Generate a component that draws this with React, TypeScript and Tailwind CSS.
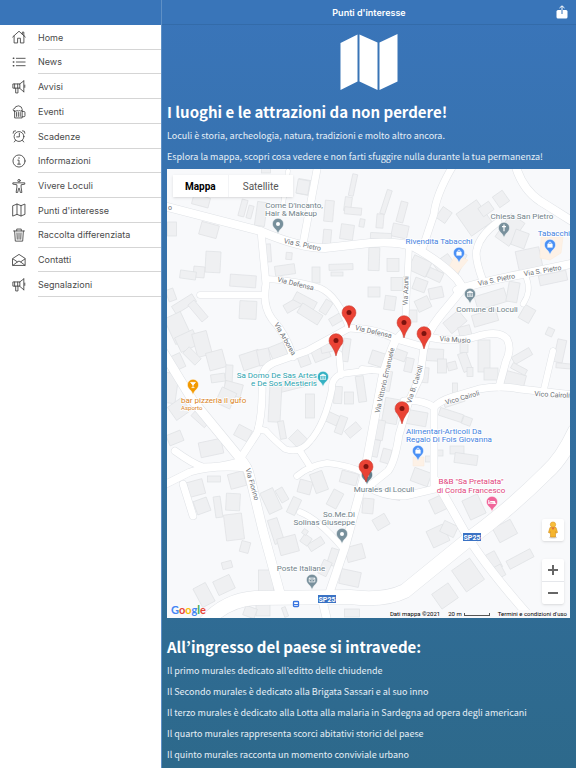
import type { ReactNode } from "react";

const line = {
  fill: "none",
  stroke: "currentColor",
  strokeWidth: 1,
  strokeLinejoin: "round" as const,
  strokeLinecap: "round" as const,
};

const megaphone = (
  <>
    <path d="M13.500 1v12.500M8.500 4.800L13.500 1M8.500 9.200l5 4.300M14.600 5.800v2.600" />
    <path d="M8.500 4.500H1v4.800h7.500zM3 4.600v4.600M6.500 4.600v4.600M4.200 9.400v5.400h2.600V9.400" />
  </>
);

const icons: Record<string, ReactNode> = {
  home: <path d="M.8 8L8 1.400 15.200 8M11.800 4.800V2.400h1.700v4M2.400 6.800v8h4V9.400h3.200v5.400h4v-8" />,
  list: (
    <>
      <path d="M5 3.800h10M5 8h10M5 12.200h10" />
      <path d="M1.600 3.800h.4M1.600 8h.4M1.600 12.200h.4" strokeWidth={1.800} />
    </>
  ),
  megaphone,
  beer: (
    <>
      <path d="M3 6.600v8.200h8.600V6.200M11.600 7.400h2q1.200 0 1.200 1.200v3.600q0 1.200-1.200 1.200h-2" />
      <path d="M3 7.400Q1 7 1.400 5.200 1.800 3.800 3.200 3.800 3.800 1.200 6 1.400 7.600.4 9 1.600q2.200.4 2.200 2.400 1 1.400 0 2.400-1.400 1-2.800 0-1 1-2.600 0-1 1.200-2.800.6z" />
      <path d="M5.200 8.600v4.400M7.300 8.600v4.400M9.400 8.600v4.400" />
    </>
  ),
  alarm: (
    <>
      <circle cx="8" cy="8.600" r="5.600" />
      <path d="M8.400 5v4H5.400M1.200 4.800Q.8 1.600 4 2M14.800 4.800Q15.200 1.600 12 2M4 13l-1.400 1.800M12 13l1.400 1.800" />
    </>
  ),
  info: (
    <>
      <circle cx="8" cy="8" r="6.900" />
      <path d="M6.600 7H8v4.400M6.400 11.600h3.200" />
      <path d="M8 4.500v.2" strokeWidth={1.500} />
    </>
  ),
  body: (
    <>
      <circle cx="8" cy="1.900" r="1.400" />
      <path d="M1.400 4.400h13.200v1.500l-4.200.7v2.600l.9 6.200H9.500L8.400 10.600h-.8L6.500 15.400H4.700l.9-6.200V6.600L1.400 5.900z" />
    </>
  ),
  map: <path d="M1.200 3L5.700 1.200l4.600 1.800 4.500-1.800v11.800l-4.500 1.800-4.600-1.800-4.500 1.800zM5.700 1.200v11.800M10.300 3v11.800" />,
  trash: (
    <path d="M1.800 3.400h12.400M5.400 3.200V1.200h5.200v2M3 3.600l.8 11.400h8.400L13 3.600M5.700 5.600l.3 7.200M8 5.600v7.200M10.300 5.600l-.3 7.200" />
  ),
  mail: (
    <path d="M1 6.200L8 1.600l7 4.600v8H1zM1.200 6.800L6.200 10.200 8 9.200l1.800 1 5-3.400M1.200 14L6.200 10.200M14.800 14L9.800 10.200" />
  ),
};

const menu: [string, string][] = [
  ["home", "Home"],
  ["list", "News"],
  ["megaphone", "Avvisi"],
  ["beer", "Eventi"],
  ["alarm", "Scadenze"],
  ["info", "Informazioni"],
  ["body", "Vivere Loculi"],
  ["map", "Punti d'interesse"],
  ["trash", "Raccolta differenziata"],
  ["mail", "Contatti"],
  ["megaphone", "Segnalazioni"],
];

const roads: [string, number][] = [
  ["M160 206L260 232Q300 249 325 249L370 244Q395 242 412 247Q440 262 457 280L463 289L440 317Q426 335 424 348", 8],
  ["M457 291Q480 283 523 275L575 264", 8],
  ["M409 247L405 330L396 340", 6],
  ["M454 165Q436 195 434 215L423 248", 7],
  ["M515 165Q522 190 540 202L575 224", 8],
  ["M483 282Q474 258 477 250Q480 236 498 223", 7],
  ["M526 278Q532 292 523 305", 5],
  ["M318 165L303 245", 7],
  ["M288 172L283 205", 4],
  ["M261 232L266 285Q262 306 272 320Q286 335 293 358", 7],
  ["M200 296H264", 6],
  ["M266 280Q300 282 320 289Q338 297 349 329", 6],
  ["M349 329L307 352L273 364Q262 369 262 382Q263 415 257 434L238 463Q220 468 203 468Q193 465 175 452", 7],
  ["M349 329Q378 330 396 340L424 348", 7],
  ["M339 355L341 376M372 371L341 375Q331 380 332 390Q325 425 310 442Q300 455 285 450Q273 440 266 432L258 430M300 452L311 469", 6],
  ["M297 477Q310 466 327 464Q347 466 365 474", 6],
  ["M160 348L193 402L239 458Q248 467 250 478L263 532L280 594", 9],
  ["M160 488L190 473Q212 466 248 469M183 485L193 517", 7],
  ["M396 340Q387 360 382 380L363 482L345 548L328 598L322 600L328 625", 8],
  ["M424 348L420 378L409 402L399 436Q395 463 388 472L368 488Q385 498 405 497L443 488", 7],
  ["M404 402Q420 400 434 408V488", 7],
  ["M434 408Q440 402 452 398L479 390Q500 386 520 390L575 396", 7],
  ["M428 338Q455 344 475 338Q499 330 507 340Q512 350 506 362L499 388", 7],
  ["M553 352L544 390M362 370L381 372", 6],
  ["M300 513Q318 520 342 548", 6],
  ["M204 625Q225 601 255 599L350 598Q385 602 405 592L469 540Q510 510 546 474Q562 460 575 432", 14],
  ["M436 482L466 535Q485 567 530 618", 8],
];

// centre x, centre y, width, height, rotation
const buildings: [number, number, number, number, number][] = [
  [201, 202, 17, 10, 15], [304, 188, 13, 15, 10], [266, 171, 9, 6, 0], [303, 188, 12, 14, 10],
  [243, 209, 6, 17, 15], [250, 213, 5, 13, 15], [261, 215, 10, 24, 8], [329, 212, 9, 21, 5],
  [353, 186, 5, 22, 12], [348, 205, 7, 14, 8], [353, 212, 17, 7, 5], [347, 233, 13, 15, 8],
  [362, 224, 5, 8, 10], [327, 239, 8, 17, 5], [172, 230, 9, 14, 0], [209, 231, 18, 13, 15],
  [213, 263, 15, 21, 3], [199, 273, 11, 11, 5], [188, 276, 16, 8, 8], [268, 254, 6, 18, -4],
  [289, 257, 6, 7, 5], [285, 271, 20, 10, -8], [316, 276, 8, 16, 0], [341, 268, 24, 6, -2],
  [337, 275, 12, 4, 0], [243, 282, 26, 12, 4], [248, 311, 17, 18, 3], [171, 296, 8, 12, -20],
  [184, 305, 24, 9, -32], [198, 312, 22, 8, 50], [178, 329, 18, 28, -25], [293, 306, 18, 9, -30],
  [305, 302, 23, 9, 28], [310, 315, 24, 11, 32], [326, 308, 8, 14, 32], [337, 320, 15, 8, -30],
  [187, 342, 20, 16, -25], [175, 364, 17, 15, -25], [202, 345, 15, 24, -15], [216, 361, 17, 18, -15],
  [192, 357, 17, 9, 45], [251, 361, 20, 16, -18], [278, 352, 16, 13, -22], [264, 358, 12, 16, -12],
  [229, 376, 7, 20, 3], [218, 379, 14, 8, -8], [233, 390, 18, 13, 15], [304, 361, 11, 12, -20],
  [321, 355, 17, 12, -22], [328, 347, 15, 12, -12], [346, 351, 7, 23, 8], [294, 385, 45, 10, -14],
  [275, 404, 12, 38, 3], [282, 431, 6, 18, -10], [310, 407, 9, 24, 0], [338, 396, 8, 17, 3],
  [349, 399, 9, 12, 0], [361, 390, 8, 26, -8], [331, 419, 16, 10, 25], [341, 426, 8, 18, 20],
  [353, 431, 15, 9, -40], [298, 440, 13, 14, -45], [243, 434, 15, 12, 28], [226, 399, 16, 17, 25],
  [211, 449, 23, 15, -12], [201, 419, 10, 18, -48], [170, 389, 14, 30, 8], [179, 410, 17, 16, -35],
  [175, 439, 15, 11, -22], [196, 489, 16, 15, -15], [214, 480, 13, 6, 0], [202, 507, 14, 14, -20],
  [233, 503, 14, 17, 3], [218, 508, 7, 21, -8], [237, 481, 16, 15, -15], [234, 528, 18, 26, -7],
  [245, 548, 9, 11, 15], [227, 566, 10, 7, -15], [224, 586, 18, 15, -25], [204, 596, 14, 21, -28],
  [266, 582, 15, 22, 0], [263, 611, 14, 12, 0], [276, 532, 10, 25, -18], [288, 546, 19, 17, -15],
  [271, 502, 14, 23, -25], [282, 496, 8, 14, -30], [294, 507, 9, 17, 25], [305, 488, 13, 13, 15],
  [319, 483, 13, 20, -20], [335, 500, 11, 17, 28], [316, 545, 16, 8, -32], [306, 541, 9, 9, 35],
  [333, 558, 8, 17, 18], [325, 569, 9, 15, 25], [355, 554, 18, 15, -15], [350, 579, 20, 15, 12],
  [349, 479, 17, 12, 15], [393, 497, 15, 6, 12], [381, 523, 14, 12, -30], [368, 507, 11, 15, 5],
  [386, 203, 5, 25, 18], [380, 222, 7, 14, 5], [402, 213, 7, 21, 15], [400, 232, 16, 13, 12],
  [474, 219, 25, 27, -35], [486, 210, 13, 10, -35], [501, 200, 12, 13, -35], [444, 216, 11, 13, 35],
  [510, 231, 17, 28, 35], [529, 260, 24, 20, -12], [520, 240, 14, 16, 20], [444, 265, 18, 13, -35],
  [458, 265, 9, 24, 25], [381, 237, 21, 6, 3], [374, 260, 11, 23, 2], [393, 266, 12, 13, 0],
  [397, 285, 12, 13, 0], [374, 293, 12, 10, 0], [390, 304, 11, 14, 8], [420, 267, 19, 16, 25],
  [435, 276, 15, 10, 25], [420, 286, 13, 12, 20], [436, 294, 14, 11, -12], [423, 305, 14, 12, -25],
  [413, 317, 8, 12, 0], [455, 323, 20, 14, -40], [491, 300, 31, 14, -17], [513, 293, 11, 20, 10],
  [553, 279, 28, 10, -12], [527, 315, 12, 15, 30], [485, 319, 25, 12, -16], [465, 333, 12, 12, -15],
  [378, 360, 16, 14, 18], [397, 355, 19, 10, 20], [409, 366, 8, 14, 12], [387, 382, 8, 20, 10],
  [391, 412, 15, 25, 10], [379, 431, 10, 20, 10], [374, 449, 10, 17, 12], [386, 457, 9, 14, 15],
  [435, 356, 17, 12, 3], [442, 367, 9, 14, 0], [452, 367, 9, 8, -15], [465, 363, 9, 19, -20],
  [464, 348, 8, 11, 0], [484, 357, 12, 32, 0], [470, 373, 6, 9, 0], [491, 375, 14, 12, 0],
  [515, 381, 20, 14, 15], [522, 357, 20, 8, -30], [519, 370, 16, 6, 28], [550, 333, 7, 8, 25],
  [560, 352, 9, 23, 12], [565, 367, 18, 5, 5], [454, 402, 21, 7, -18], [455, 390, 5, 12, 0],
  [416, 419, 22, 14, 10], [424, 376, 9, 15, 5], [451, 416, 24, 8, 18], [467, 422, 9, 8, 20],
  [457, 451, 14, 8, 0], [466, 460, 23, 10, 8], [439, 454, 8, 6, 0], [428, 460, 5, 6, 0],
  [421, 478, 18, 14, 20], [439, 505, 16, 15, -25], [474, 508, 17, 21, -25], [438, 537, 18, 18, -25],
  [449, 530, 15, 12, 25], [505, 532, 20, 16, -28], [520, 560, 27, 9, -28], [494, 562, 10, 18, -28],
  [500, 572, 7, 12, -28], [468, 576, 22, 26, -35], [445, 597, 20, 18, -35], [495, 388, 5, 6, 0],
  [305, 533, 5, 5, 35], [250, 613, 12, 10, 20], [352, 614, 15, 8, 0], [285, 613, 4, 10, -20],
];

const GREY = "#6f8189";
const BLUE = "#3f7fe0";
const TEAL = "#2ba3af";
const ORANGE = "#d98324";
const PINK = "#e0447c";
const ROAD = "#6c7075";

const labels: [string, number, number, string, string, number][] = [
  ["Come D'incanto,", 294, 209, GREY, "middle", 8],
  ["Hair & Makeup", 291, 217, GREY, "middle", 8],
  ["Chiesa San Pietro", 522, 220, GREY, "middle", 8],
  ["Rivendita Tabacchi", 439, 245, BLUE, "middle", 8],
  ["Tabacchi", 570, 237, BLUE, "end", 8],
  ["Comune di Loculi", 487, 313, GREY, "middle", 8],
  ["Sa Domo De Sas Artes", 317, 379, TEAL, "end", 8],
  ["e De Sos Mestieris", 317, 387, TEAL, "end", 8],
  ["bar pizzeria il gufo", 181, 404, ORANGE, "start", 8],
  ["Asporto", 181, 411, ORANGE, "start", 6],
  ["Alimentari-Articoli Da", 406, 435, BLUE, "start", 8],
  ["Regalo Di Fois Giovanna", 406, 443, BLUE, "start", 8],
  ["B&B \"Sa Pretalata\"", 471, 485, PINK, "middle", 8],
  ["di Corda Francesco", 471, 494, PINK, "middle", 8],
  ["Murales di Loculi", 384, 493, GREY, "middle", 8],
  ["So.Me.Di", 355, 518, GREY, "end", 8],
  ["Solinas Giuseppe", 355, 526, GREY, "end", 8],
  ["Poste Italiane", 301, 572, GREY, "middle", 8],
];

// text, centre x, centre y, rotation
const streets: [string, number, number, number][] = [
  ["Via S. Pietro", 302, 248, 12],
  ["Via Defensa", 295, 287, 14],
  ["Via Arborea", 283, 341, 60],
  ["Via Azuni", 408, 292, -88],
  ["Via S. Pietro", 497, 283, -12],
  ["Via S. Pietro", 543, 274, -10],
  ["Via Defensa", 373, 335, 13],
  ["Via Musio", 455, 343, 4],
  ["Via Vittorio Emanuele", 387, 382, -77],
  ["Via B. Cairoli", 417, 386, -72],
  ["Vico Cairoli", 463, 401, -16],
  ["Vico Cairoli", 552, 398, 3],
  ["Via Fiorino", 250, 486, 74],
];

const places: [number, number, string, string][] = [
  [278, 225, "#78909c", "dot"],
  [504, 229, "#78909c", "cross"],
  [459, 254, "#4a90f5", "bag"],
  [550, 246, "#4a90f5", "bag"],
  [470, 295, "#78909c", "hall"],
  [323, 378, "#35b1c3", "hall"],
  [193, 386, "#f29900", "cup"],
  [418, 452, "#4a90f5", "bag"],
  [492, 503, "#f0659a", "bed"],
  [367, 476, "#607d8b", "dot"],
  [342, 535, "#78909c", "dot"],
  [312, 581, "#78909c", "mail"],
];

const glyphs: Record<string, ReactNode> = {
  dot: <circle r="2" fill="#fff" />,
  cross: <path d="M0-3.500V3.200M-2-1.300H2" stroke="#fff" strokeWidth="1.200" />,
  bag: (
    <>
      <rect x="-2.600" y="-1.200" width="5.200" height="3.800" fill="#fff" />
      <path d="M-1.300-1Q-1.300-3 0-3T1.300-1" fill="none" stroke="#fff" strokeWidth=".8" />
    </>
  ),
  hall: <path d="M-3-1.300L0-3 3-1.300zM-2.400-.6V2M-.8-.6V2M.8-.6V2M2.400-.6V2M-3 2.400H3" fill="#fff" stroke="#fff" strokeWidth=".7" />,
  cup: <path d="M-2.400-2.600H2.400L0 .2zM0 0V2.600M-1.500 2.600H1.500" fill="#fff" stroke="#fff" strokeWidth=".8" />,
  bed: <path d="M-3.200-2V2M-3.200 1H3.200V2M-1.800-.5H2.700V1" fill="#fff" stroke="#fff" strokeWidth="1" />,
  mail: <path d="M-2.800-1.900H2.800V1.900H-2.800zM-2.800-1.900L0 .4 2.800-1.900" fill="none" stroke="#fff" strokeWidth=".8" />,
};

const pins: [number, number][] = [
  [349, 329], [336, 357], [404, 339], [424, 350], [402, 425], [366, 483],
];

function TownMap() {
  return (
    <svg
      className="block h-full w-full font-['Roboto',sans-serif]"
      viewBox="167 170 403 449"
      preserveAspectRatio="xMidYMid slice"
      role="img"
      aria-label="Mappa di Loculi"
    >
      <rect x="-400" y="-200" width="1600" height="1200" fill="#f8f9fb" />
      <g fill="#eff0f2" stroke="#dfe1e4" strokeWidth=".7">
        {buildings.map(([x, y, w, h, r], i) => (
          <rect key={i} x={-w / 2} y={-h / 2} width={w} height={h} transform={`translate(${x} ${y}) rotate(${r})`} />
        ))}
      </g>
      <g fill="#fdf1e6" stroke="#faead9" strokeWidth=".5">
        <path d="M447 272l8-16 13 5-13 16zM541 238h22l-2 16-11 7-10-2zM413 458h11v9h-11z" />
      </g>
      <g fill="none" stroke="#dfe2e6" strokeLinecap="round" strokeLinejoin="round">
        {roads.map(([d, w]) => (
          <path key={d} d={d} strokeWidth={w + 1} />
        ))}
      </g>
      <g fill="none" stroke="#fff" strokeLinecap="round" strokeLinejoin="round">
        {roads.map(([d, w]) => (
          <path key={d} d={d} strokeWidth={w} />
        ))}
      </g>
      <g fontSize="7" fill={ROAD} stroke="#fff" strokeWidth="1.500" paintOrder="stroke" textAnchor="middle">
        {streets.map(([t, x, y, r]) => (
          <text key={t + x} transform={`translate(${x} ${y}) rotate(${r})`}>
            {t}
          </text>
        ))}
        <text x="170" y="211">o</text>
      </g>
      {places.map(([x, y, color, glyph]) => (
        <g key={`${x}-${y}`} transform={`translate(${x} ${y})`}>
          <path d="M0 9.500Q-1 6-3.800 4A5.600 5.600 0 1 1 3.800 4Q1 6 0 9.500z" fill={color} stroke="#fff" strokeWidth=".5" />
          {glyphs[glyph]}
        </g>
      ))}
      <g stroke="#fff" strokeWidth="1.500" paintOrder="stroke">
        {labels.map(([t, x, y, color, anchor, size]) => (
          <text key={t} x={x} y={y} fill={color} fontSize={size} textAnchor={anchor as "start" | "middle" | "end"}>
            {t}
          </text>
        ))}
      </g>
      {[[327, 600], [472, 538]].map(([x, y]) => (
        <g key={x}>
          <rect x={x - 9} y={y - 4} width="18" height="8" fill="#3a72c4" />
          <text x={x} y={y + 2.500} fontSize="7" fontWeight="700" fill="#fff" textAnchor="middle">
            SP25
          </text>
        </g>
      ))}
      <rect x="293.500" y="602.500" width="5" height="5" rx=".8" fill="#fff" stroke="#3874e0" strokeWidth="1.300" />
      <path d="M294 605.500h4" stroke="#3874e0" />
      {pins.map(([x, y]) => (
        <g key={`${x}-${y}`} transform={`translate(${x} ${y})`}>
          <path d="M0 0Q-1-5-4.500-10A7 7 0 1 1 4.500-10Q1-5 0 0z" fill="#ea4335" stroke="#c5372b" strokeWidth=".5" />
          <circle cy="-15.500" r="2.500" fill="#7d130e" />
        </g>
      ))}
    </svg>
  );
}

function MapPanel() {
  return (
    <section className="relative mt-0.5 h-[449px] overflow-hidden bg-[#f8f9fb]">
      <TownMap />
      <div className="absolute left-1.5 top-1.5 flex h-[22px] bg-white font-['Roboto',sans-serif] text-[10px] shadow">
        <button type="button" className="border-r border-gray-100 px-3 font-bold text-black">
          Mappa
        </button>
        <button type="button" className="px-3.5 text-[#565656]">
          Satellite
        </button>
      </div>
      <button
        type="button"
        aria-label="Street View"
        className="absolute bottom-[77px] right-1.5 flex h-[22px] w-[22px] items-center justify-center rounded-xs bg-white shadow"
      >
        <svg width="12" height="18" viewBox="0 0 12 18">
          <ellipse cx="6" cy="16.500" rx="4" ry="1" fill="#d8d8d8" />
          <path d="M3 6.500h6l1.500 5-1.300.6-.7-1.500V16h-5v-5.400l-.7 1.500-1.300-.6z" fill="#f5b52e" stroke="#d48b14" strokeWidth=".6" />
          <circle cx="6" cy="3.600" r="2.700" fill="#f8bf3a" stroke="#d48b14" strokeWidth=".5" />
          <path d="M4.400 6.600L6 9l1.600-2.400z" fill="#e56a3b" />
        </svg>
      </button>
      <div className="absolute bottom-3.5 right-1.5 flex h-[45px] w-[22px] flex-col rounded-xs bg-white shadow">
        <button type="button" aria-label="Zoom avanti" className="flex flex-1 items-center justify-center border-b border-gray-200">
          <svg width="10" height="10" viewBox="0 0 10 10">
            <path d="M0 5h10M5 0v10" stroke="#666" strokeWidth="2" />
          </svg>
        </button>
        <button type="button" aria-label="Zoom indietro" className="flex flex-1 items-center justify-center">
          <svg width="10" height="10" viewBox="0 0 10 10">
            <path d="M0 5h10" stroke="#666" strokeWidth="2" />
          </svg>
        </button>
      </div>
      <a
        href="#google"
        className="absolute bottom-px left-1 font-['Lato',sans-serif] text-[11px] font-bold leading-[14px] text-[#4285f4]"
      >
        G<span className="text-[#ea4335]">o</span>
        <span className="text-[#fbbc05]">o</span>g<span className="text-[#34a853]">l</span>
        <span className="text-[#ea4335]">e</span>
      </a>
      <div className="absolute bottom-0 right-0 flex h-2 items-center gap-2 bg-[#f8f9fb] px-[3px] font-['Roboto',sans-serif] text-[6px] leading-[8px] text-black">
        <span>Dati mappa ©2021</span>
        <span className="flex items-center gap-0.5">
          20 m
          <span className="block h-[3px] w-[26px] border border-t-0 border-[#555]" />
        </span>
        <a href="#termini">Termini e condizioni d'uso</a>
      </div>
    </section>
  );
}

const murals = [
  "Il primo murales dedicato all’editto delle chiudende",
  "Il Secondo murales è dedicato alla Brigata Sassari e al suo inno",
  "Il terzo murales è dedicato alla Lotta alla malaria in Sardegna ad opera degli americani",
  "Il quarto murales rappresenta scorci abitativi storici del paese",
  "Il quinto murales racconta un momento conviviale urbano",
];

export default function App() {
  return (
    <div className="flex min-h-screen bg-white font-['Inter',sans-serif]">
      <aside className="w-[161px] shrink-0 bg-white">
        <div className="h-[25px] bg-[#3975b9]" />
        <nav className="grid h-[272px] grid-rows-11 text-[9px] text-[#4a4a4a]">
          {menu.map(([icon, label]) => (
            <a key={label} href={`#${icon}`} className="flex items-stretch pl-3">
              <svg className="mr-3 w-3.5 shrink-0 self-center text-[#444]" height="14" viewBox="0 0 16 16" {...line}>
                {icons[icon]}
              </svg>
              <span className="flex flex-1 items-center border-b border-[#d5d5d5] pt-px">{label}</span>
            </a>
          ))}
        </nav>
      </aside>
      <div className="flex min-w-0 flex-1 flex-col border-l border-[#5f90c6] bg-linear-to-b from-[#3a75ba] to-[#2d698b]">
        <header className="grid h-[25px] grid-cols-[1fr_auto_1fr] items-center border-b border-[#336ba9] bg-[#3975b9] px-2 text-white">
          <h1 className="col-start-2 pt-px text-[9px] font-semibold">Punti d'interesse</h1>
          <button type="button" aria-label="Condividi" className="justify-self-end">
            <svg width="12" height="14" viewBox="0 0 12 14">
              <path d="M2 5h8q1.500 0 1.500 1.500v5.500q0 1.500-1.500 1.500H2Q.5 13.500.5 12V6.500Q.5 5 2 5z" fill="#fff" />
              <path d="M6 5v4" stroke="#3975b9" />
              <path d="M6 5V1M3.500 3L6 .8 8.500 3" fill="none" stroke="#fff" />
            </svg>
          </button>
        </header>
        <main className="flex flex-col pb-1 pl-[5px] pr-1.5 font-['Noto_Sans_CJK_JP',sans-serif] text-[9px] leading-[21px] text-[#e6eff6]">
          <svg className="mt-2 self-center" width="58" height="58" viewBox="0 0 58 58" fill="#fff">
            <path d="M.5 10L17.500 1.500V48.500L.5 57zM19.500 1.500L37.500 9.500V57L19.500 48.500zM39.500 9.500L57.500 1V48.500L39.500 57z" />
          </svg>
          <h2 className="mt-2 text-[15px] font-bold leading-[26px] text-white">
            I luoghi e le attrazioni da non perdere!
          </h2>
          <p>Loculi è storia, archeologia, natura, tradizioni e molto altro ancora.</p>
          <p>Esplora la mappa, scopri cosa vedere e non farti sfuggire nulla durante la tua permanenza!</p>
          <MapPanel />
          <h2 className="mt-4 text-[15px] font-bold leading-[26px] text-white">
            All’ingresso del paese si intravede:
          </h2>
          {murals.map((text) => (
            <p key={text}>{text}</p>
          ))}
        </main>
      </div>
    </div>
  );
}
